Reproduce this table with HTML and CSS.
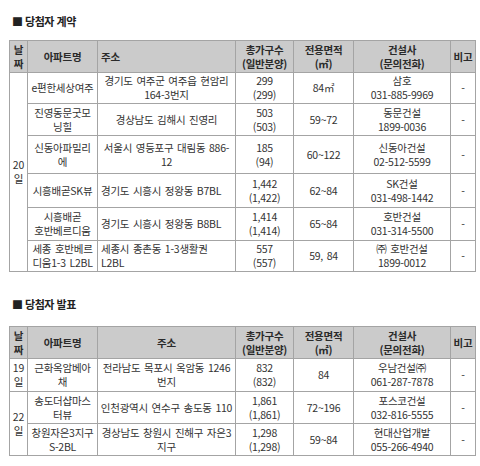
FILE: index.html
```html
<!DOCTYPE html>
<html lang="ko">
<head>
<meta charset="utf-8">
<link rel="stylesheet" href="styles.css">
</head>
<body>
<h2 class="title t1">■ 당첨자 계약</h2>
<table class="grid">
<colgroup><col class="c1"><col class="c2"><col class="c3"><col class="c4"><col class="c5"><col class="c6"><col class="c7"></colgroup>
<thead>
<tr class="hd"><th>날<br>짜</th><th>아파트명</th><th class="left">주소</th><th>총가구수<br>(일반분양)</th><th>전용면적<br>(㎡)</th><th>건설사<br>(문의전화)</th><th>비고</th></tr>
</thead>
<tbody>
<tr class="r31"><td rowspan="6" class="day">20<br>일</td><td>e편한세상여주</td><td>경기도 여주군 여주읍 현암리<br>164-3번지</td><td>299<br>(299)</td><td>84㎡</td><td>삼호<br>031-885-9969</td><td>-</td></tr>
<tr class="r32"><td>진영동문굿모<br>닝힐</td><td>경상남도 김해시 진영리</td><td>503<br>(503)</td><td>59~72</td><td>동문건설<br>1899-0036</td><td>-</td></tr>
<tr class="r37"><td>신동아파밀리<br>에</td><td>서울시 영등포구 대림동 886-<br>12</td><td>185<br>(94)</td><td>60~122</td><td>신동아건설<br>02-512-5599</td><td>-</td></tr>
<tr class="r34"><td>시흥배곧SK뷰</td><td class="left">경기도 시흥시 정왕동 B7BL</td><td>1,442<br>(1,422)</td><td>62~84</td><td>SK건설<br>031-498-1442</td><td>-</td></tr>
<tr class="r33"><td>시흥배곧<br>호반베르디움</td><td class="left">경기도 시흥시 정왕동 B8BL</td><td>1,414<br>(1,414)</td><td>65~84</td><td>호반건설<br>031-314-5500</td><td>-</td></tr>
<tr class="r31"><td>세종 호반베르<br>디움1-3 L2BL</td><td class="left">세종시 종촌동 1-3생활권<br>L2BL</td><td>557<br>(557)</td><td>59, 84</td><td>㈜ 호반건설<br>1899-0012</td><td>-</td></tr>
</tbody>
</table>

<h2 class="title t2">■ 당첨자 발표</h2>
<table class="grid">
<colgroup><col class="c1"><col class="c2"><col class="c3"><col class="c4"><col class="c5"><col class="c6"><col class="c7"></colgroup>
<thead>
<tr class="hd"><th>날<br>짜</th><th>아파트명</th><th>주소</th><th>총가구수<br>(일반분양)</th><th>전용면적<br>(㎡)</th><th>건설사<br>(문의전화)</th><th>비고</th></tr>
</thead>
<tbody>
<tr class="r33"><td class="day">19<br>일</td><td>근화옥암베아<br>채</td><td>전라남도 목포시 옥암동 1246<br>번지</td><td>832<br>(832)</td><td>84</td><td>우남건설㈜<br>061-287-7878</td><td>-</td></tr>
<tr class="r32"><td rowspan="2" class="day">22<br>일</td><td>송도더샵마스<br>터뷰</td><td>인천광역시 연수구 송도동 110</td><td>1,861<br>(1,861)</td><td>72~196</td><td>포스코건설<br>032-816-5555</td><td>-</td></tr>
<tr class="r32"><td>창원자은3지구<br>S-2BL</td><td>경상남도 창원시 진해구 자은3<br>지구</td><td>1,298<br>(1,298)</td><td>59~84</td><td>현대산업개발<br>055-266-4940</td><td>-</td></tr>
</tbody>
</table>
</body>
</html>
```

FILE: styles.css
```css
html, body {
  background: #ffffff;
}
body {
  margin: 0;
  padding: 14px 5px 0 9px;
  font-family: "Noto Sans CJK KR", "Noto Sans", sans-serif;
  font-size: 10.5px;
  color: #333333;
}
.title {
  margin: 0;
  padding-left: 3px;
  font-size: 11px;
  line-height: 14px;
  font-weight: bold;
  letter-spacing: -0.5px;
  color: #222;
}
.t1 { margin-bottom: 12px; }
.t2 { margin-top: 25px; margin-bottom: 15px; }

.grid {
  width: 466px;
  border-collapse: collapse;
  table-layout: fixed;
}
.c1 { width: 18px; }
.c2 { width: 70px; }
.c3 { width: 138px; }
.c4 { width: 58px; }
.c5 { width: 60px; }
.c6 { width: 97px; }
.c7 { width: 25px; }

.grid th, .grid td {
  border: 1px solid #a4a4a4;
  padding: 0 1px;
  text-align: center;
  vertical-align: middle;
  line-height: 14px;
  letter-spacing: -0.25px;
  word-spacing: 1px;
  white-space: nowrap;
  overflow: hidden;
}
.grid th {
  background: #cbcbcb;
  font-weight: bold;
  color: #2a2a2a;
  height: 31px;
}
.grid th.left, .grid td.left {
  text-align: left;
  padding-left: 3px;
}
.grid td.day {
  letter-spacing: 0;
}
.r31 td { height: 30px; }
.r32 td { height: 31px; }
.r33 td { height: 32px; }
.r34 td { height: 33px; }
.r37 td { height: 37px; }
```
